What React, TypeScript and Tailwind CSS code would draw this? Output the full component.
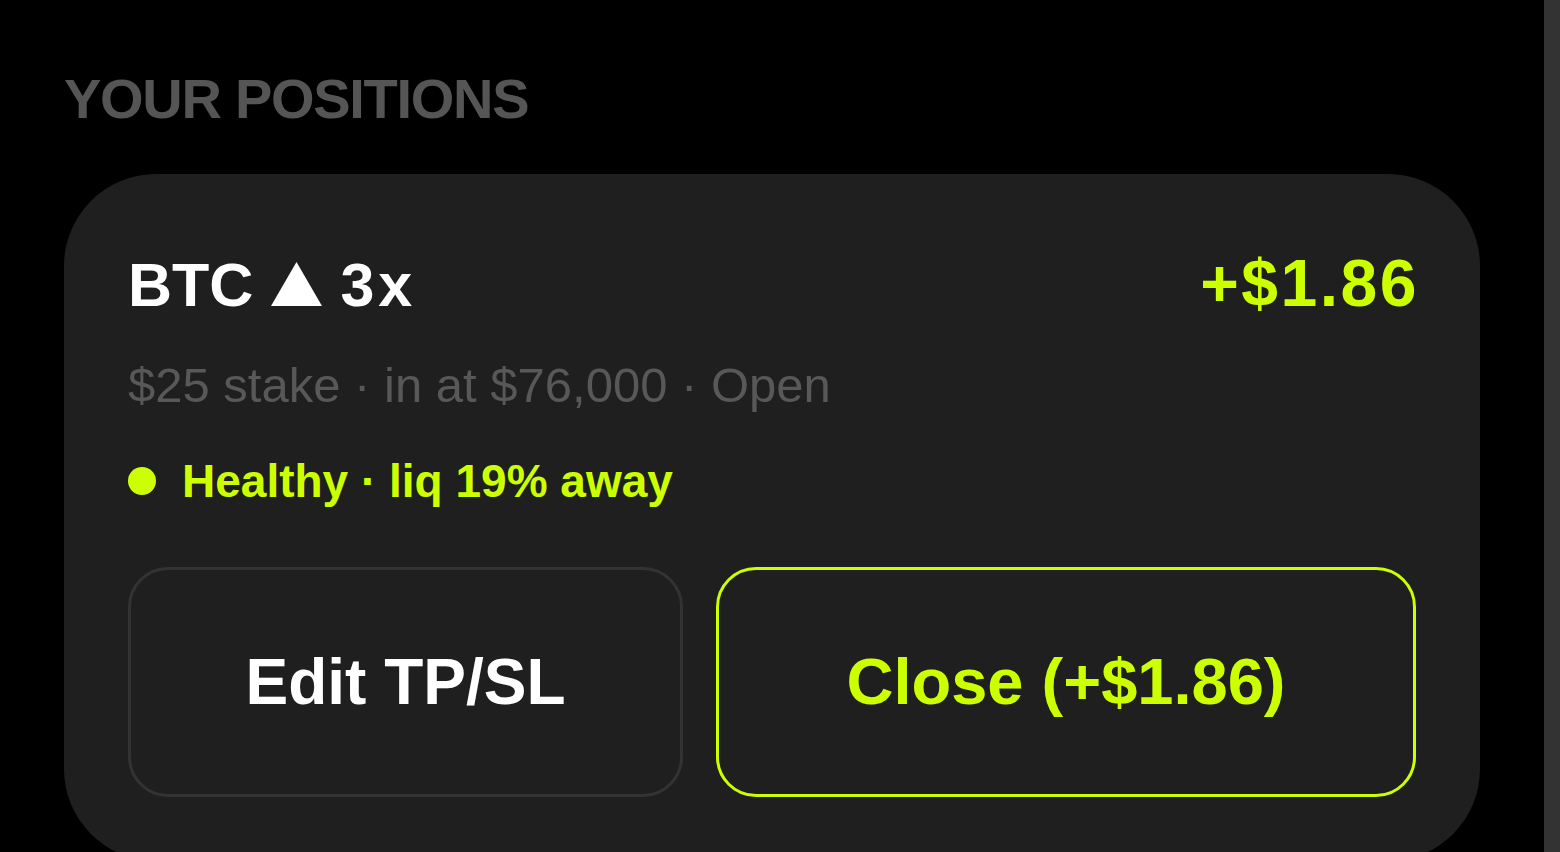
const lime = "text-[#ccff00]";

const PositionCard = () => {
  return (
    <div className="rounded-[92px] bg-[#1f1f1f] px-16 pt-[76px] pb-16">
      {/* symbol + pnl */}
      <div className="flex items-baseline justify-between">
        <h3 className="text-[61px] leading-[60px] font-bold text-white">
          BTC
          <svg viewBox="0 0 51 44" className="ml-[18px] mr-[18px] inline-block h-[44px] w-[51px] align-[0px]">
            <path d="M25.5 0 L51 44 L0 44 Z" fill="#ffffff" />
          </svg>
          <span className="tracking-[4px]">3x</span>
        </h3>
        <span className={`-mr-[3px] text-[66px] leading-[66px] font-bold tracking-[2.5px] ${lime}`}>
          +$1.86
        </span>
      </div>

      <p className="mt-[45px] text-[49px] leading-[48px] text-[#585858]">
        $25 stake · in at $76,000 · Open
      </p>

      <div className="mt-[49px] flex items-center gap-[26px]">
        <span className="h-7 w-7 rounded-full bg-[#ccff00]" />
        <span className={`text-[46px] leading-[46px] font-bold ${lime}`}>
          Healthy · liq 19% away
        </span>
      </div>

      {/* actions */}
      <div className="mt-[63px] flex gap-[33px]">
        <button className="flex h-[230px] w-[555px] items-center justify-center rounded-[40px] border-[3px] border-[#333333] text-[64px] font-bold text-white">
          Edit TP/SL
        </button>
        <button className={`flex h-[230px] flex-1 items-center justify-center rounded-[40px] border-[3px] border-[#ccff00] text-[65px] font-bold ${lime}`}>
          Close (+$1.86)
        </button>
      </div>
    </div>
  );
};

export default function App() {
  return (
    <div className="flex h-screen overflow-hidden bg-black font-['Liberation_Sans',Arial,sans-serif]">
      <main className="flex-1 px-16 pt-[71px]">
        <h2 className="text-[56px] leading-[56px] font-bold text-[#555555] tracking-[-0.023em]">
          YOUR POSITIONS
        </h2>
        <div className="mt-[47px]">
          <PositionCard />
        </div>
      </main>
      {/* scrollbar track */}
      <div className="w-4 bg-[#333333]" />
    </div>
  );
}
